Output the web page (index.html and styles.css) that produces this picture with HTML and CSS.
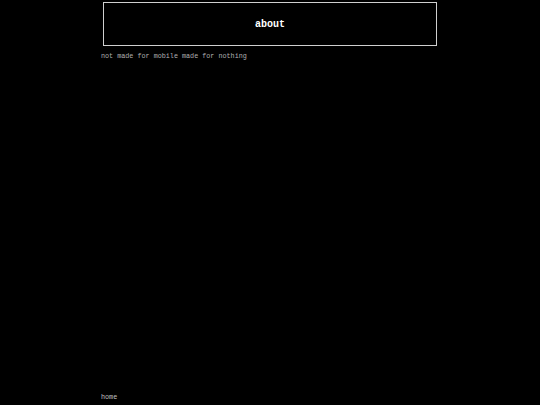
FILE: index.html
```html
<!DOCTYPE html>
<html>
<head>
<meta charset="utf-8">
<link rel="stylesheet" href="styles.css">
</head>
<body>
<div class="page">
  <header class="title-box"><h1 class="title">about</h1></header>
  <p class="tagline">not made for mobile made for nothing</p>
  <footer class="footer"><a class="home" href="#">home</a></footer>
</div>
</body>
</html>
```
FILE: styles.css
```css
html, body {
  margin: 0;
  padding: 0;
  background: #000;
  height: 100%;
}
.page {
  width: 338px;
  margin: 0 auto;
  min-height: 100vh;
  display: flex;
  flex-direction: column;
  font-family: "Liberation Mono", monospace;
  box-sizing: border-box;
  padding-top: 2px;
}
.title-box {
  margin: 0 2px;
  height: 44px;
  box-sizing: border-box;
  border: 1px solid #cfcfcf;
  display: flex;
  align-items: center;
  justify-content: center;
}
.title {
  margin: 0;
  font-size: 10px;
  font-weight: bold;
  color: #fff;
}
.tagline {
  margin: 6px 0 0;
  font-size: 6.75px;
  color: #b0b0b0;
}
.footer {
  margin-top: auto;
  padding-bottom: 1px;
}
.home {
  font-size: 6.75px;
  color: #c0c0c0;
  text-decoration: none;
}
```
